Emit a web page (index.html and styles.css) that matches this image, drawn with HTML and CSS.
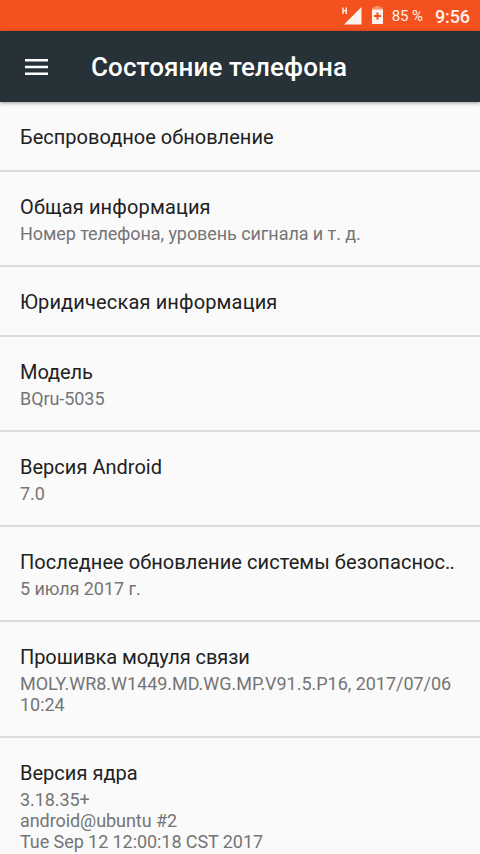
FILE: index.html
```html
<!DOCTYPE html>
<html lang="ru">
<head>
<meta charset="utf-8">
<title>Состояние телефона</title>
<link rel="stylesheet" href="styles.css">
</head>
<body>
<div class="status">
  <svg class="signal" width="21" height="20" viewBox="0 0 21 20"><path d="M2 1.500v6.500M5.300 1.500v6.500M2 4.700h3.300" fill="none" stroke="#ffe9e0" stroke-width="1.400"/><path d="M20.500 1v17.500H3z" fill="#fff2ec"/></svg>
  <svg class="battery" width="11" height="18" viewBox="0 0 11 18"><path d="M3 0h5v1.500h3V4H0V1.500h3z" fill="#fb8f68"/><path d="M0 3.500h11V18H0z" fill="#fff2ec"/><path d="M5.500 6.500v7M2 10h7" stroke="#f4511e" stroke-width="2"/></svg>
  <span class="percent">85 %</span>
  <span class="clock">9:56</span>
</div>
<header class="bar">
  <svg class="menu" width="23" height="16" viewBox="0 0 23 16"><path d="M0 1.250h23M0 8h23M0 14.750h23" stroke="#fff" stroke-width="2.500"/></svg>
  <h1>Состояние телефона</h1>
</header>
<main class="list">
  <section class="item"><h2>Беспроводное обновление</h2></section>
  <section class="item"><h2 class="wide">Общая информация</h2><p>Номер телефона, уровень сигнала и т. д.</p></section>
  <section class="item"><h2 class="wide">Юридическая информация</h2></section>
  <section class="item"><h2 class="tight">Модель</h2><p>BQru-5035</p></section>
  <section class="item"><h2>Версия Android</h2><p>7.0</p></section>
  <section class="item"><h2 class="long">Последнее обновление системы безопаснос<span class="dots">..</span></h2><p>5 июля 2017 г.</p></section>
  <section class="item"><h2 class="tight">Прошивка модуля связи</h2><p class="firmware">MOLY.WR8.W1449.MD.WG.MP.V91.5.P16, 2017/07/06<br>10:24</p></section>
  <section class="item"><h2>Версия ядра</h2><p>3.18.35+<br>android@ubuntu #2<br>Tue Sep 12 12:00:18 CST 2017</p></section>
</main>
</body>
</html>
```
FILE: styles.css
```css
* { box-sizing: border-box; }
body {
  margin: 0;
  height: 854px;
  overflow: hidden;
  background: #fafafa;
  font-family: Roboto, sans-serif;
}
h1, h2, p { margin: 0; white-space: nowrap; }
.status {
  display: flex;
  align-items: center;
  justify-content: flex-end;
  height: 31px;
  padding-right: 10px;
  background: #f4511e;
  color: #fff2ec;
}
.signal { margin-right: 10px; }
.battery { margin: 0 9px 2px 0; }
.percent { margin-right: 12px; font-size: 15px; letter-spacing: -0.1px; }
.clock { padding-top: 2px; font-size: 18px; font-weight: 500; letter-spacing: -0.1px; }
.bar {
  display: flex;
  align-items: center;
  height: 71px;
  padding-left: 25px;
  background: #263238;
  color: #fff;
  box-shadow: 0 1px 4px rgba(0, 0, 0, 0.4);
}
.menu { margin-right: 43px; }
h1 { font-size: 26px; font-weight: 500; letter-spacing: 0.1px; }
.item {
  padding: 23px 20px 21px;
  border-bottom: 2px solid #dcdcdc;
}
h2 {
  color: #212121;
  font-size: 20px;
  font-weight: 400;
  line-height: 24px;
  letter-spacing: 0.02px;
}
.wide { letter-spacing: 0.15px; }
.tight { letter-spacing: -0.08px; }
.long { letter-spacing: 0.07px; }
.dots { letter-spacing: -0.8px; }
p {
  margin-top: 4px;
  color: #757575;
  font-size: 18px;
  line-height: 21px;
  letter-spacing: -0.07px;
}
.firmware { letter-spacing: -0.03px; }
```
